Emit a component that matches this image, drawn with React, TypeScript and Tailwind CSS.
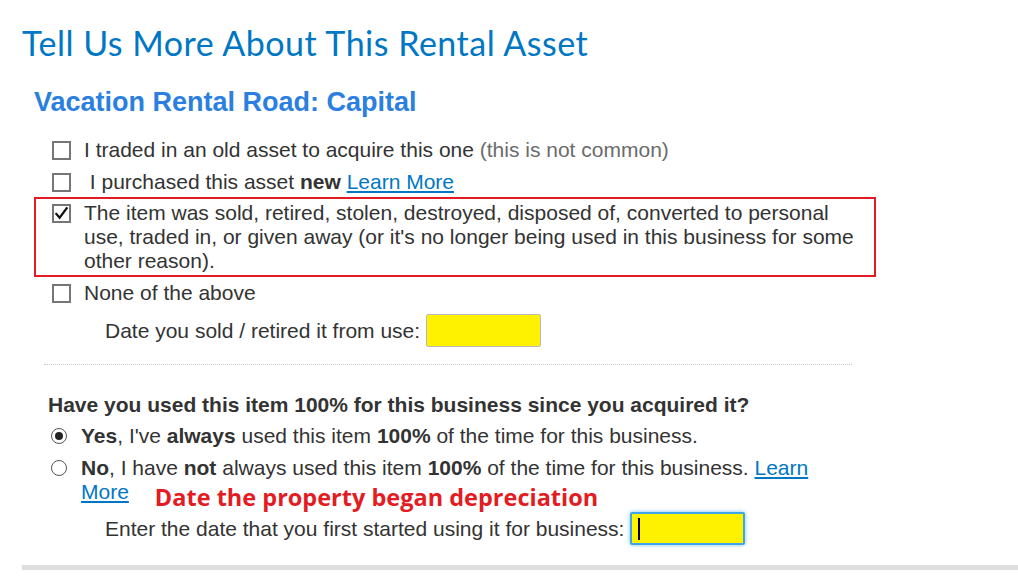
const body = "font-['Liberation_Sans',Arial,sans-serif] text-[21px] leading-[24px] text-[#333]"

function Box({ checked = false }: { checked?: boolean }) {
  return (
    <span className="mt-[3px] flex h-[19px] w-[19px] shrink-0 items-center justify-center border-2 border-[#767676] bg-white">
      {checked && (
        <svg viewBox="0 0 16 16" className="h-[15px] w-[15px]">
          <path d="M2.5 8.5 6 12.5 13.5 2.5" fill="none" stroke="#111" strokeWidth={2.4} strokeLinecap="square" />
        </svg>
      )}
    </span>
  )
}

function Radio({ checked = false }: { checked?: boolean }) {
  return (
    <span className="mt-[4px] flex h-[16px] w-[16px] shrink-0 items-center justify-center rounded-full border border-[#555] bg-white">
      {checked && <span className="h-[8px] w-[8px] rounded-full bg-[#222]" />}
    </span>
  )
}

export default function App() {
  return (
    <div className="h-[580px] w-[1018px] overflow-hidden bg-white">
      {/* Page title */}
      <h1 className="ml-[22px] mt-[23px] font-['Lato',sans-serif] text-[34px] leading-[40px] tracking-[0.5px] text-[#0077c5]">
        Tell Us More About This Rental Asset
      </h1>

      <h2 className="ml-[34px] mt-[23px] font-['Liberation_Sans',Arial,sans-serif] text-[27px] font-bold leading-[32px] text-[#2a7fe0]">
        Vacation Rental Road: Capital
      </h2>

      {/* Disposition options */}
      <div className={`mt-[20px] ${body}`}>
        <div className="flex gap-[13px] pl-[52px]">
          <Box />
          <span>
            I traded in an old asset to acquire this one <span className="text-[#6b6b6b]">(this is not common)</span>
          </span>
        </div>
        <div className="mt-[8px] flex gap-[13px] pl-[52px]">
          <Box />
          <span>
            &nbsp;I purchased this asset <b>new</b>{' '}
            <a className="text-[#0077c5] underline">Learn More</a>
          </span>
        </div>
        <div className="mt-[3px] ml-[34px] mr-[142px] border-2 border-[#e31c23] py-[2px] pl-[16px] pr-[16px]">
          <div className="flex gap-[13px]">
            <Box checked />
            <span>
              The item was sold, retired, stolen, destroyed, disposed of, converted to personal use, traded in, or given
              away (or it's no longer being used in this business for some other reason).
            </span>
          </div>
        </div>
        <div className="mt-[4px] flex gap-[13px] pl-[52px]">
          <Box />
          <span>None of the above</span>
        </div>
        <div className="mt-[9px] flex items-center gap-[6px] pl-[105px]">
          <span>Date you sold / retired it from use:</span>
          <span className="h-[33px] w-[115px] rounded-[2px] border border-[#bbb] bg-[#fff200]" />
        </div>
      </div>

      <div className="ml-[44px] mt-[17px] w-[808px] border-t border-dotted border-[#c8c8c8]" />

      {/* Business use question */}
      <div className={`mt-[28px] ${body}`}>
        <p className="pl-[48px] font-bold">Have you used this item 100% for this business since you acquired it?</p>
        <div className="mt-[7px] flex gap-[14px] pl-[51px]">
          <Radio checked />
          <span>
            <b>Yes</b>, I've <b>always</b> used this item <b>100%</b> of the time for this business.
          </span>
        </div>
        <div className="mt-[8px] flex gap-[14px] pl-[51px]">
          <Radio />
          <span className="w-[745px]">
            <b>No</b>, I have <b>not</b> always used this item <b>100%</b> of the time for this business.{' '}
            <a className="text-[#0077c5] underline">Learn More</a>
            <span className="ml-[26px] inline-block pt-[5px] align-top font-['Open_Sans',sans-serif] text-[23.5px] font-bold leading-[24px] text-[#e31c23]">
              Date the property began depreciation
            </span>
          </span>
        </div>
        <div className="mt-[3px] flex items-center gap-[6px] pl-[105px]">
          <span>Enter the date that you first started using it for business:</span>
          <span className="flex h-[33px] w-[115px] items-center rounded-[2px] border-2 border-[#3ea6e8] bg-[#fff200] pl-[6px] shadow-[0_0_4px_#7cc3f0]">
            <span className="h-[22px] w-[2px] bg-black" />
          </span>
        </div>
      </div>

      <div className="ml-[22px] mt-[20px] h-[5px] bg-[#dedede]" />
    </div>
  )
}
